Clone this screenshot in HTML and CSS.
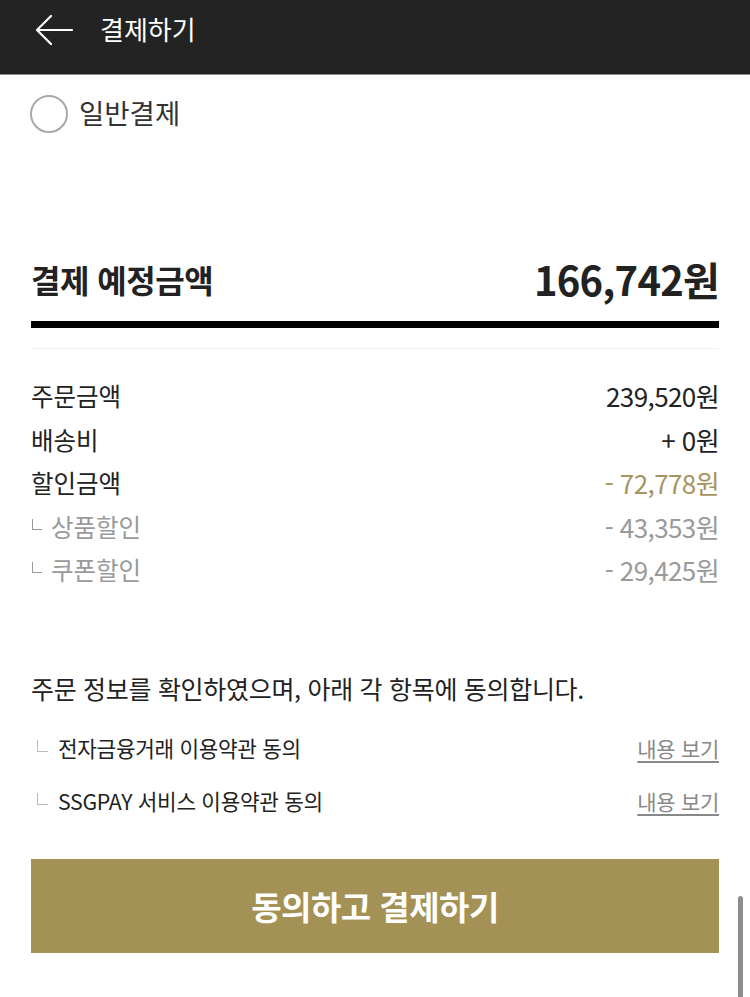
FILE: index.html
```html
<!DOCTYPE html>
<html lang="ko">
<head>
  <meta charset="UTF-8">
  <title>결제하기</title>
  <link rel="stylesheet" href="styles.css">
</head>
<body>

  <div class="top-bar">
    <svg class="back-icon" width="38" height="32" viewBox="0 0 38 32">
      <path d="M37 16 H2 M16 2 L2 16 L16 30" fill="none" stroke="#fff" stroke-width="2.2" stroke-linecap="round" stroke-linejoin="round"/>
    </svg>
    <span class="top-title">결제하기</span>
  </div>

  <div class="page">

    <div class="pay-method">
      <span class="radio"></span>
      <span class="method-name">일반결제</span>
    </div>

    <div class="total-row">
      <span class="total-label">결제 예정금액</span>
      <span class="total-price">166,742원</span>
    </div>
    <div class="thick-line"></div>
    <div class="thin-line"></div>

    <div class="price-list">
      <div class="price-row">
        <span>주문금액</span>
        <span class="num">239,520원</span>
      </div>
      <div class="price-row">
        <span>배송비</span>
        <span class="num">+ 0원</span>
      </div>
      <div class="price-row">
        <span>할인금액</span>
        <span class="num gold">- 72,778원</span>
      </div>
      <div class="price-row sub">
        <span><i class="corner"></i>상품할인</span>
        <span class="num">- 43,353원</span>
      </div>
      <div class="price-row sub">
        <span><i class="corner"></i>쿠폰할인</span>
        <span class="num">- 29,425원</span>
      </div>
    </div>

    <p class="agree-text">주문 정보를 확인하였으며, 아래 각 항목에 동의합니다.</p>

    <div class="agree-list">
      <div class="agree-item">
        <span><i class="corner light"></i>전자금융거래 이용약관 동의</span>
        <a class="view-link">내용 보기</a>
      </div>
      <div class="agree-item">
        <span><i class="corner light"></i>SSGPAY 서비스 이용약관 동의</span>
        <a class="view-link">내용 보기</a>
      </div>
    </div>

    <button class="pay-btn">동의하고 결제하기</button>

  </div>

  <div class="scroll-thumb"></div>

</body>
</html>
```

FILE: styles.css
```css
body {
  margin: 0;
  font-family: "Noto Sans CJK KR", "Noto Sans", sans-serif;
  color: #222;
  background: #fff;
}
.top-bar {
  height: 75px;
  background: #232323;
  border-bottom: 1px solid #8a8a8a;
  box-sizing: border-box;
  display: flex;
  align-items: flex-start;
  padding: 14px 0 0 35px;
}
.back-icon {
  display: block;
}
.top-title {
  color: #fff;
  font-size: 26px;
  line-height: 30px;
  margin-left: 27px;
}
.page {
  padding: 0 31px;
}
.pay-method {
  display: flex;
  align-items: center;
  padding-top: 20px;
  height: 38px;
}
.radio {
  width: 34px;
  height: 34px;
  border: 2px solid #a8a8a8;
  border-radius: 50%;
  margin-left: -1px;
}
.method-name {
  font-size: 27.5px;
  color: #333;
  margin-left: 11px;
  margin-top: -4px;
}
.total-row {
  margin-top: 121px;
  height: 50px;
  display: flex;
  justify-content: space-between;
  align-items: center;
}
.total-label {
  font-size: 32px;
  font-weight: bold;
  letter-spacing: -0.5px;
}
.total-price {
  font-size: 40px;
  font-weight: bold;
  letter-spacing: -0.8px;
}
.thick-line {
  margin-top: 17px;
  height: 7px;
  background: #000;
}
.thin-line {
  margin-top: 20px;
  height: 1px;
  background: #f0f0f0;
}
.price-list {
  margin-top: 25px;
}
.price-row {
  height: 43.5px;
  display: flex;
  justify-content: space-between;
  align-items: center;
  font-size: 24.5px;
}
.price-row .num {
  font-size: 26px;
  letter-spacing: -0.6px;
}
.price-row .gold {
  color: #a8945e;
}
.price-row.sub {
  color: #9a9a9a;
}
.corner {
  display: inline-block;
  width: 9px;
  height: 10px;
  border-left: 1.5px solid #999;
  border-bottom: 1.5px solid #999;
  margin: 0 9px 12px 1px;
  vertical-align: middle;
}
.corner.light {
  width: 10px;
  height: 11px;
  border-color: #bbb;
  margin: 0 10px 12px 6px;
}
.agree-text {
  margin: 80px 0 0;
  font-size: 25px;
  line-height: 32px;
  letter-spacing: -0.3px;
}
.agree-list {
  margin-top: 18px;
}
.agree-item {
  height: 53px;
  display: flex;
  justify-content: space-between;
  align-items: center;
  font-size: 21.3px;
  letter-spacing: -0.3px;
}
.view-link {
  color: #888;
  font-size: 21px;
  text-decoration: underline;
  text-underline-offset: 4px;
}
.pay-btn {
  display: block;
  width: 100%;
  height: 94px;
  margin-top: 31px;
  background: #a39155;
  border: none;
  color: #fff;
  font-family: inherit;
  font-size: 33px;
  font-weight: bold;
  letter-spacing: -0.5px;
}
.scroll-thumb {
  position: absolute;
  right: 7px;
  top: 896px;
  width: 5px;
  height: 110px;
  background: #8e8e8e;
  border-radius: 3px;
}
```
